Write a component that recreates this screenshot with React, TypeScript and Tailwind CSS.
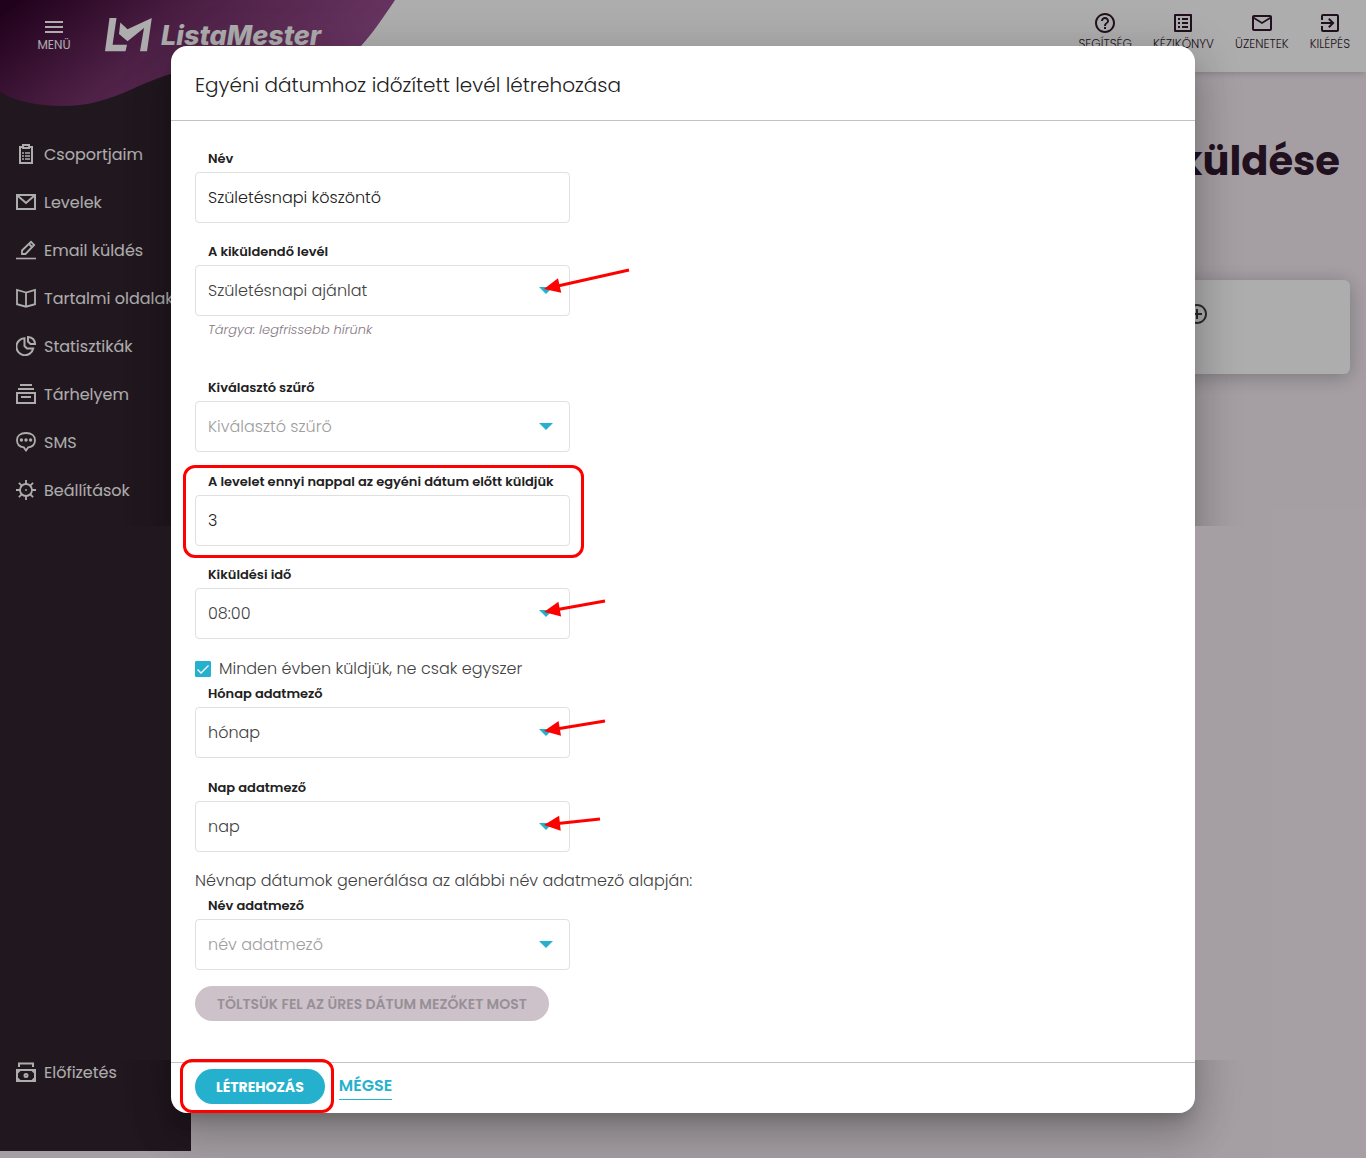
import { useState } from "react";
import type { ReactNode } from "react";
import {
  MdOutlineHelpOutline,
  MdOutlineListAlt,
  MdMailOutline,
  MdExitToApp,
  MdMenu,
  MdAddCircleOutline,
} from "react-icons/md";

const inputClass =
  "block h-[51px] w-full appearance-none rounded border border-[#e0e0e0] bg-white px-3 text-base font-light outline-none focus:border-[#25b1cd]";

/** Thin line icons of the side menu, all on a 20px grid. */
function MenuIcon({ children }: { children: ReactNode }) {
  return (
    <svg
      width="20"
      height="20"
      viewBox="0 0 20 20"
      fill="none"
      stroke="currentColor"
      strokeWidth="2"
      className="mb-0.5 shrink-0"
      aria-hidden="true"
    >
      {children}
    </svg>
  );
}

const menuItems: { label: string; icon: ReactNode }[] = [
  {
    label: "Csoportjaim",
    icon: (
      <MenuIcon>
        <path d="M6 3H4v16h12V3h-2M7 1h6v3H7z" />
        <path d="M6 9h2M9 9h5M6 12h2M9 12h5M6 15h2M9 15h5" strokeWidth="1.6" />
      </MenuIcon>
    ),
  },
  {
    label: "Levelek",
    icon: (
      <MenuIcon>
        <path d="M1 3h18v14H1zM2 4l8 7 8-7" />
      </MenuIcon>
    ),
  },
  {
    label: "Email küldés",
    icon: (
      <MenuIcon>
        <path d="M0 18.5h20" strokeWidth="1.6" />
        <path d="M6 14v-3.5L15 1.8l3.2 3.2L9.5 14zM13 4l3 3" strokeWidth="1.8" />
      </MenuIcon>
    ),
  },
  {
    label: "Tartalmi oldalak",
    icon: (
      <MenuIcon>
        <path
          d="M10 4.5L1 2v14.2l9 2.5 9-2.5V2zM10 4.5v14"
          strokeWidth="1.8"
        />
      </MenuIcon>
    ),
  },
  {
    label: "Statisztikák",
    icon: (
      <MenuIcon>
        <path d="M8.5 2.2A8.5 8.5 0 1 0 17.2 12.5H11L8.5 10z" />
        <path d="M12 1c4 .3 6.8 3 7 7h-4.5L12 5.5z" />
      </MenuIcon>
    ),
  },
  {
    label: "Tárhelyem",
    icon: (
      <MenuIcon>
        <path d="M4 1h12M2 5h16M1 9h18v10H1zM5 13h10" />
      </MenuIcon>
    ),
  },
  {
    label: "SMS",
    icon: (
      <MenuIcon>
        <path
          d="M10 18.5L7.8 15.4C3.5 14.8 1 12 1 8.2 1 3.8 4.5 1 10 1s9 2.8 9 7.2c0 3.8-2.5 6.6-6.8 7.2z"
          strokeWidth="1.8"
        />
        <g fill="currentColor" stroke="none">
          <circle cx="5.4" cy="8" r="1.7" />
          <circle cx="10" cy="8" r="1.7" />
          <circle cx="14.6" cy="8" r="1.7" />
        </g>
      </MenuIcon>
    ),
  },
  {
    label: "Beállítások",
    icon: (
      <MenuIcon>
        <circle cx="10" cy="10" r="6" strokeWidth="1.8" />
        <path
          d="M10 0v4M10 16v4M0 10h4M16 10h4M2.9 2.9l2.8 2.8M14.3 14.3l2.8 2.8M2.9 17.1l2.8-2.8M14.3 5.7l2.8-2.8"
          strokeWidth="1.8"
        />
        <path d="M9.3 10h1.4" />
      </MenuIcon>
    ),
  },
];

const topLinks = [
  { label: "SEGÍTSÉG", Icon: MdOutlineHelpOutline },
  { label: "KÉZIKÖNYV", Icon: MdOutlineListAlt },
  { label: "ÜZENETEK", Icon: MdMailOutline },
  { label: "KILÉPÉS", Icon: MdExitToApp },
];

function MenuLink({ label, icon }: { label: string; icon: ReactNode }) {
  return (
    <a href="#" className="flex h-12 items-center gap-2 px-4 whitespace-nowrap">
      {icon}
      {label}
    </a>
  );
}

function Header() {
  return (
    <header className="relative z-10 flex h-[72px] items-start justify-between bg-white shadow-md">
      {/* Purple wave behind the logo */}
      <svg
        className="absolute top-0 left-0"
        width="400"
        height="110"
        viewBox="0 0 400 110"
        aria-hidden="true"
      >
        <defs>
          <linearGradient
            id="wave"
            gradientUnits="userSpaceOnUse"
            x1="20"
            y1="0"
            x2="200"
            y2="230"
          >
            <stop offset="0" stopColor="#32042b" />
            <stop offset="0.4" stopColor="#733068" />
            <stop offset="1" stopColor="#a85a9f" />
          </linearGradient>
        </defs>
        <path
          d="M0 0H395C383 18 372 34 361 46C330 76 290 84 250 78C215 70 195 68 171 74C135 84 110 106 63 106C38 106 15 101 0 92Z"
          fill="url(#wave)"
        />
      </svg>

      <div className="relative flex items-start text-white">
        <button
          type="button"
          className="ml-8 flex w-11 flex-col items-center pt-[15px] text-xs leading-3"
        >
          <MdMenu size={24} />
          MENÜ
        </button>
        <a href="#" className="ml-[29px] flex items-start gap-[7px] pt-4">
          <svg width="49" height="36" viewBox="0 0 49 36" aria-hidden="true">
            <path
              d="M4.5 2H11.5L7.6 28.7H22L20.5 35.3H0zM15.3 6.5l7.2 6.8L46.8 2 42 35.3h-7L39 12 22.5 25.3 14 18z"
              fill="currentColor"
            />
          </svg>
          <span className="font-['Inter',sans-serif] text-[27px] leading-10 font-extrabold italic">
            ListaMester
          </span>
        </a>
      </div>

      <nav className="flex gap-[21px] px-4 pt-[11px] text-[#32182e]">
        {topLinks.map(({ label, Icon }) => (
          <a
            key={label}
            href="#"
            className="flex flex-col items-center gap-[3px] text-xs leading-3 font-light"
          >
            <Icon size={24} />
            {label}
          </a>
        ))}
      </nav>
    </header>
  );
}

function Sidebar() {
  return (
    <aside className="mb-[7px] flex w-[191px] shrink-0 flex-col justify-between bg-[#32232e] pt-[59px] pb-[54px] text-base text-white">
      <nav>
        {menuItems.map((item) => (
          <MenuLink key={item.label} {...item} />
        ))}
      </nav>
      <MenuLink
        label="Előfizetés"
        icon={
          <MenuIcon>
            <path d="M3 5V1.5h14V5" />
            <path d="M1 8h18v11H1zM1 11L4 8M19 11L16 8M1 16L4 19M19 16L16 19" />
            <circle cx="10" cy="13.5" r="1.5" />
          </MenuIcon>
        }
      />
    </aside>
  );
}

function Field({
  id,
  label,
  className = "",
  children,
}: {
  id: string;
  label: string;
  className?: string;
  children: ReactNode;
}) {
  return (
    <div className={`w-[375px] max-w-full ${className}`}>
      <label
        htmlFor={id}
        className="block pl-[13px] text-[13px] leading-[26px] font-semibold whitespace-nowrap text-[#212121]"
      >
        {label}
      </label>
      <div className="relative">{children}</div>
    </div>
  );
}

function Select({
  id,
  value,
  placeholder,
}: {
  id: string;
  value?: string;
  placeholder?: string;
}) {
  return (
    <>
      <select
        id={id}
        defaultValue={value ?? ""}
        className={`${inputClass} ${value ? "text-[#424242]" : "text-[#9e9e9e]"}`}
      >
        {placeholder && <option value="">{placeholder}</option>}
        {value && <option value={value}>{value}</option>}
      </select>
      <svg
        className="pointer-events-none absolute top-[22px] right-4"
        width="15"
        height="7"
        viewBox="0 0 15 7"
        aria-hidden="true"
      >
        <path d="M0 0h14L7 7z" fill="#25b1cd" />
      </svg>
    </>
  );
}

/** Red pointer laid over a drop-down arrow. dx/dy is the tail relative to the tip. */
function Pointer({ dx, dy }: { dx: number; dy: number }) {
  const len = Math.hypot(dx, dy);
  const angle = (Math.atan2(dy, dx) * 180) / Math.PI;
  return (
    <svg
      className="pointer-events-none absolute top-6 left-[349px] overflow-visible"
      width="1"
      height="1"
      aria-hidden="true"
    >
      <g transform={`rotate(${angle})`} fill="#ff0000">
        <path d="M0 0L16-7.5V7.5z" />
        <path d={`M14-1.5H${len}V1.5H14z`} />
      </g>
    </svg>
  );
}

function Modal() {
  const [yearly, setYearly] = useState(true);

  return (
    <div className="absolute inset-0 z-20 flex items-start justify-center bg-black/32 pt-[46px]">
      <div
        role="dialog"
        aria-labelledby="dialog-title"
        className="relative w-full max-w-5xl"
      >
        {/* Elevation shadow, drawn around the top and bottom parts only */}
        <div className="absolute inset-0 rounded-2xl shadow-[0_11px_15px_-7px_rgba(0,0,0,0.2),0_24px_38px_3px_rgba(0,0,0,0.14),0_9px_46px_8px_rgba(0,0,0,0.12)] [clip-path:inset(-60px_-60px_587px_-60px)]" />
        <div className="absolute inset-0 rounded-2xl shadow-[0_11px_15px_-7px_rgba(0,0,0,0.2),0_24px_38px_3px_rgba(0,0,0,0.14),0_9px_46px_8px_rgba(0,0,0,0.12)] [clip-path:inset(1014px_-60px_-60px_-60px)]" />

        <form
          className="relative rounded-2xl bg-white text-[#424242]"
          onSubmit={(e) => e.preventDefault()}
        >
          <h2
            id="dialog-title"
            className="border-b border-[#c9c0c7] px-6 pt-6 pb-5 text-xl leading-[30px] font-light text-[#212121]"
          >
            Egyéni dátumhoz időzített levél létrehozása
          </h2>

          <div className="px-6 pt-[25px] pb-[41px]">
            <Field id="name" label="Név">
              <input
                id="name"
                type="text"
                defaultValue="Születésnapi köszöntő"
                className={`${inputClass} text-[#212121]`}
              />
            </Field>

            <Field id="letter" label="A kiküldendő levél" className="mt-4">
              <Select id="letter" value="Születésnapi ajánlat" />
              <Pointer dx={85} dy={-19} />
            </Field>
            <p className="mt-0.5 pl-[13px] text-[13px] leading-6 font-light text-[#857782] italic">
              Tárgya: legfrissebb hírünk
            </p>

            <Field id="filter" label="Kiválasztó szűrő" className="mt-[33px]">
              <Select id="filter" placeholder="Kiválasztó szűrő" />
            </Field>

            <Field
              id="days"
              label="A levelet ennyi nappal az egyéni dátum előtt küldjük"
              className="mt-[17px]"
            >
              <input
                id="days"
                type="text"
                inputMode="numeric"
                defaultValue="3"
                className={`${inputClass} text-[#212121]`}
              />
              <span className="pointer-events-none absolute -top-[30px] -right-3.5 -bottom-3 -left-3 rounded-xl border-3 border-[#ff0000]" />
            </Field>

            <Field id="time" label="Kiküldési idő" className="mt-4">
              <Select id="time" value="08:00" />
              <Pointer dx={61} dy={-11} />
            </Field>

            <label className="mt-[18px] flex items-center gap-2 text-base leading-6 font-light">
              <span className="relative flex">
                <input
                  type="checkbox"
                  checked={yearly}
                  onChange={(e) => setYearly(e.target.checked)}
                  className="size-4 appearance-none rounded-[1px] border border-[#25b1cd] checked:bg-[#25b1cd]"
                />
                {yearly && (
                  <svg
                    className="pointer-events-none absolute inset-0"
                    width="16"
                    height="16"
                    viewBox="0 0 16 16"
                    fill="none"
                    stroke="white"
                    strokeWidth="1.3"
                    aria-hidden="true"
                  >
                    <path d="M2.5 8.5l3.5 3.5 7.5-7.5" />
                  </svg>
                )}
              </span>
              Minden évben küldjük, ne csak egyszer
            </label>

            <Field id="month" label="Hónap adatmező">
              <Select id="month" value="hónap" />
              <Pointer dx={61} dy={-10} />
            </Field>

            <Field id="day" label="Nap adatmező" className="mt-[17px]">
              <Select id="day" value="nap" />
              <Pointer dx={56} dy={-6} />
            </Field>

            <p className="mt-[17px] text-base leading-6 font-light">
              Névnap dátumok generálása az alábbi név adatmező alapján:
            </p>
            <Field id="name-field" label="Név adatmező">
              <Select id="name-field" placeholder="név adatmező" />
            </Field>

            <button
              type="button"
              disabled
              className="mt-4 block h-[35px] rounded-full bg-[#cdc2ca] px-[22px] text-sm font-semibold text-[#978f95]"
            >
              TÖLTSÜK FEL AZ ÜRES DÁTUM MEZŐKET MOST
            </button>
          </div>

          <div className="flex items-center gap-3.5 border-t border-[#c9c0c7] px-6 pt-1.5 pb-[9px]">
            <div className="relative">
              <button
                type="submit"
                className="block h-[35px] rounded-full bg-[#25b1cd] px-[21px] text-sm font-bold text-white"
              >
                LÉTREHOZÁS
              </button>
              <span className="pointer-events-none absolute -top-[10px] -right-[9px] -bottom-[9px] -left-[15px] rounded-xl border-3 border-[#ff0000]" />
            </div>
            <a
              href="#"
              className="border-b border-[#25b1cd] text-base leading-[26px] font-semibold text-[#25b1cd]"
            >
              MÉGSE
            </a>
          </div>
        </form>
      </div>
    </div>
  );
}

export default function App() {
  return (
    <div className="relative flex min-h-screen flex-col bg-[#f4ebf1] font-['Poppins','Inter',sans-serif] text-[#32182e]">
      <Header />
      <div className="flex grow">
        <Sidebar />
        <main className="grow px-4 pt-[59px]">
          <h1 className="pr-2.5 text-right text-[40px] leading-[60px] font-bold">
            küldése
          </h1>
          <section className="mt-[89px] flex h-[94px] justify-end rounded-md bg-white pt-[22px] pr-[141px] text-[#424242] shadow-[0_3px_20px_rgba(0,0,0,0.25)]">
            <MdAddCircleOutline size={24} />
          </section>
        </main>
      </div>
      <Modal />
    </div>
  );
}
